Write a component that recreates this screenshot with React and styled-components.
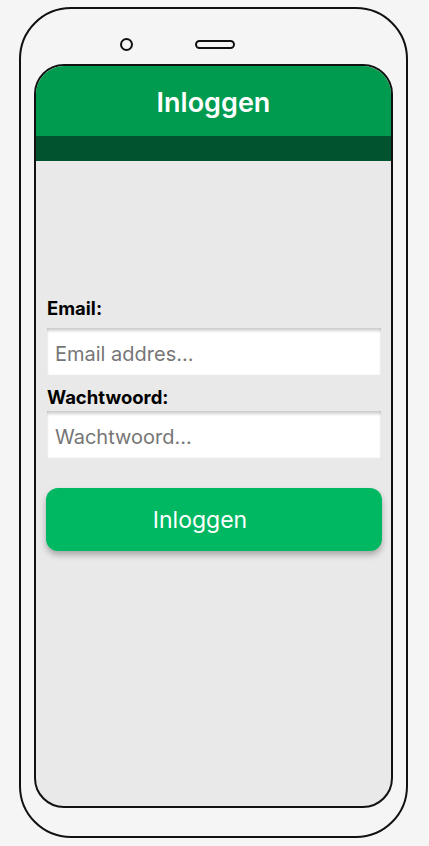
import React from "react";
import styled, { createGlobalStyle } from "styled-components";

const GlobalStyle = createGlobalStyle`
	html, body {
		margin: 0;
		padding: 0;
		background: #f5f5f5;
		font-family: Inter, "Noto Sans", Arial, sans-serif;
	}
	* {
		box-sizing: border-box;
	}
`;

const Page = styled.div`
	width: 429px;
	height: 846px;
	padding: 7px 0 0 19px;
`;

const Phone = styled.div`
	width: 389px;
	height: 831px;
	border: 2px solid #111;
	border-radius: 52px;
	background: #f5f5f5;
	display: flex;
	flex-direction: column;
	padding: 28px 13px 28px 13px;
`;

const Notch = styled.div`
	display: flex;
	align-items: center;
	height: 14px;
	padding-left: 86px;
	gap: 62px;
`;

const Camera = styled.div`
	width: 13px;
	height: 13px;
	border: 2px solid #111;
	border-radius: 50%;
`;

const Speaker = styled.div`
	width: 40px;
	height: 9px;
	border: 2px solid #111;
	border-radius: 5px;
`;

const Screen = styled.div`
	margin-top: 13px;
	flex: 1;
	border: 2px solid #111;
	border-radius: 30px;
	overflow: hidden;
	background: #e9e9e9;
	display: flex;
	flex-direction: column;
`;

const Header = styled.div`
	height: 70px;
	background: #009b4f;
	display: flex;
	align-items: center;
	justify-content: center;
	color: #fff;
	font-size: 27px;
	font-weight: 600;
	padding-top: 3px;
`;

const Band = styled.div`
	height: 25px;
	background: #00532e;
`;

const Form = styled.div`
	padding: 137px 10px 0 11px;
	display: flex;
	flex-direction: column;
`;

const Label = styled.label`
	font-size: 18.5px;
	font-weight: 700;
	color: #000;
	line-height: 20px;
	margin-bottom: ${({ $gap }) => $gap}px;
`;

const Input = styled.input`
	width: 334px;
	height: 47px;
	border: none;
	outline: none;
	background: #fff;
	box-shadow: inset 0 4px 3px -1px rgba(0, 0, 0, 0.18),
		inset 1px 0 2px rgba(0, 0, 0, 0.06), inset -1px 0 2px rgba(0, 0, 0, 0.06);
	padding: 4px 8px 0 8px;
	font-family: inherit;
	font-size: 20px;
	color: #333;
	margin-bottom: ${({ $gap }) => $gap}px;
	&::placeholder {
		color: #767676;
	}
`;

const Button = styled.button`
	width: 336px;
	height: 63px;
	margin-left: -1px;
	border: none;
	border-radius: 12px;
	background: #00b862;
	color: #fff;
	font-family: inherit;
	font-size: 23px;
	font-weight: 400;
	padding: 0 28px 0 0;
	box-shadow: 0 4px 6px rgba(0, 0, 0, 0.28);
	cursor: pointer;
`;

const App = () => (
	<>
		<GlobalStyle />
		<Page>
			<Phone>
				<Notch>
					<Camera />
					<Speaker />
				</Notch>
				<Screen>
					<Header>Inloggen</Header>
					<Band />
					<Form>
						<Label $gap={10}>Email:</Label>
						<Input placeholder="Email addres..." $gap={12} />
						<Label $gap={4}>Wachtwoord:</Label>
						<Input type="password" placeholder="Wachtwoord..." $gap={30} />
						<Button>Inloggen</Button>
					</Form>
				</Screen>
			</Phone>
		</Page>
	</>
);

export default App;
